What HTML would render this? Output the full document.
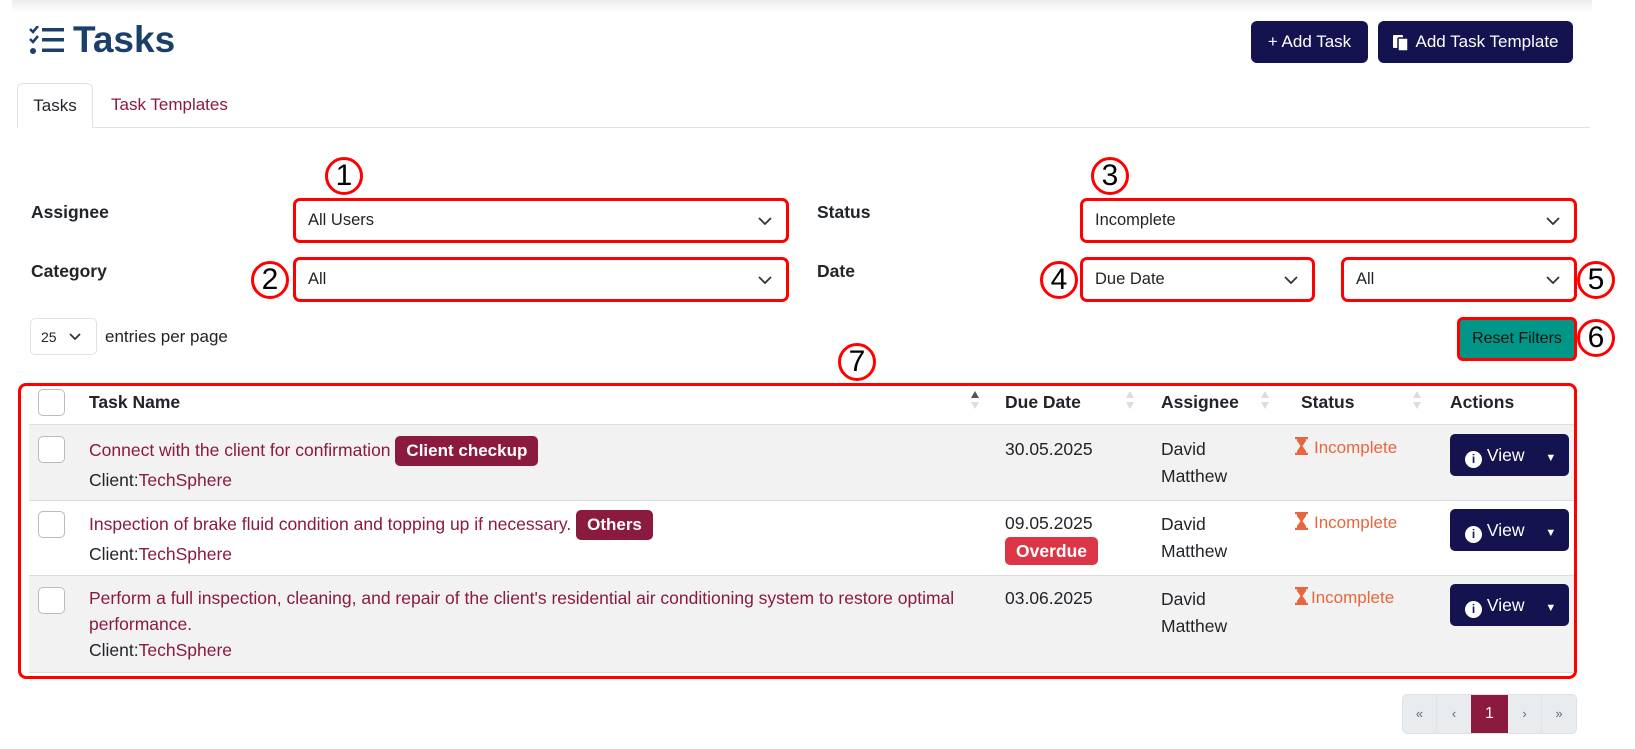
<!DOCTYPE html>
<html><head><meta charset="utf-8"><style>
*{box-sizing:border-box;margin:0;padding:0}
body{width:1635px;height:749px;background:#fff;font-family:"Liberation Sans",sans-serif;color:#212529;position:relative;overflow:hidden;font-size:16px}
.a{position:absolute}
.topbar{left:12px;top:0;width:1580px;height:12px;background:linear-gradient(#ececec,#fff)}
.btn{background:#14124f;color:#fff;border-radius:6px;display:flex;align-items:center;justify-content:center;font-size:17px}
.sel{border:3px solid #f00;border-radius:7px;background:#fff;font-size:16.5px;padding-left:12px;display:flex;align-items:center}
.sel svg{position:absolute;right:14px;top:50%;margin-top:-4px}
.lbl{font-weight:bold;font-size:17.5px}
.circ{width:38px;height:38px;border:3px solid #f00;border-radius:50%;background:#fff;display:flex;align-items:center;justify-content:center;font-size:30px;color:#000}
.link{color:#8b1a3f}
.badge{display:inline-block;background:#8b1a3f;color:#fff;font-weight:bold;border-radius:5px;padding:2px 11px;font-size:17px;line-height:26px}
.cb{width:27px;height:27px;border:1.5px solid #bbb;border-radius:5px;background:#fff}
.st{color:#e8663d;font-size:17px}
.row{font-size:17.5px}
.view{width:119px;height:42px;border-radius:5px;background:#14124f;color:#fff;font-size:17px}
</style></head><body>
<div class="a topbar"></div>
<svg class="a" style="left:29px;top:26px" width="36" height="29" viewBox="0 0 36 29"><path d="M1 3l3 3 5-6M1 13l3 3 5-6" stroke="#1b3f6b" stroke-width="2.6" fill="none"/><circle cx="4" cy="25" r="3" fill="#1b3f6b"/><rect x="13" y="2" width="22" height="3.5" fill="#1b3f6b"/><rect x="13" y="12" width="22" height="3.5" fill="#1b3f6b"/><rect x="13" y="22.5" width="22" height="3.5" fill="#1b3f6b"/></svg>
<div class="a" style="left:73px;top:19px;font-size:37px;font-weight:bold;color:#1b3f6b">Tasks</div>
<div class="a btn" style="left:1251px;top:21px;width:117px;height:42px">+ Add Task</div>
<div class="a btn" style="left:1378px;top:21px;width:195px;height:42px"><svg width="18" height="18" viewBox="0 0 18 18" style="margin-right:5px"><rect x="1" y="2" width="10" height="13" rx="1" fill="#fff"/><rect x="6" y="5" width="10" height="13" rx="1" fill="#fff" stroke="#14124f" stroke-width="1.5"/></svg>Add Task Template</div>
<div class="a" style="left:17px;top:127px;width:1573px;height:1px;background:#dee2e6"></div>
<div class="a" style="left:17px;top:83px;width:76px;height:45px;border:1px solid #dee2e6;border-bottom:none;border-radius:6px 6px 0 0;background:#fff;text-align:center;line-height:44px;font-size:17px">Tasks</div>
<div class="a link" style="left:111px;top:83px;line-height:44px;font-size:17px">Task Templates</div>

<div class="a lbl" style="left:31px;top:202px">Assignee</div>
<div class="a lbl" style="left:31px;top:261px">Category</div>
<div class="a lbl" style="left:817px;top:202px">Status</div>
<div class="a lbl" style="left:817px;top:261px">Date</div>

<div class="a sel" style="left:293px;top:198px;width:496px;height:45px">All Users<svg width="14" height="8"><path d="M1 1l6 6 6-6" stroke="#333" stroke-width="1.8" fill="none"/></svg></div>
<div class="a sel" style="left:293px;top:257px;width:496px;height:45px">All<svg width="14" height="8"><path d="M1 1l6 6 6-6" stroke="#333" stroke-width="1.8" fill="none"/></svg></div>
<div class="a sel" style="left:1080px;top:198px;width:497px;height:45px">Incomplete<svg width="14" height="8"><path d="M1 1l6 6 6-6" stroke="#333" stroke-width="1.8" fill="none"/></svg></div>
<div class="a sel" style="left:1080px;top:257px;width:235px;height:45px">Due Date<svg width="14" height="8"><path d="M1 1l6 6 6-6" stroke="#333" stroke-width="1.8" fill="none"/></svg></div>
<div class="a sel" style="left:1341px;top:257px;width:236px;height:45px">All<svg width="14" height="8"><path d="M1 1l6 6 6-6" stroke="#333" stroke-width="1.8" fill="none"/></svg></div>

<div class="a circ" style="left:325px;top:157px">1</div>
<div class="a circ" style="left:251px;top:261px">2</div>
<div class="a circ" style="left:1091px;top:157px">3</div>
<div class="a circ" style="left:1040px;top:261px">4</div>
<div class="a circ" style="left:1577px;top:261px">5</div>
<div class="a circ" style="left:1577px;top:319px">6</div>
<div class="a circ" style="left:838px;top:343px">7</div>

<div class="a" style="left:30px;top:318px;width:67px;height:37px;border:1px solid #dee2e6;border-radius:5px;font-size:14px;padding:10px 0 0 10px">25<svg width="12" height="8" style="position:absolute;left:38px;top:14px"><path d="M1 1l5 5 5-5" stroke="#333" stroke-width="1.8" fill="none"/></svg></div>
<div class="a" style="left:105px;top:327px;font-size:17px">entries per page</div>
<div class="a" style="left:1457px;top:317px;width:120px;height:44px;border:3px solid #f00;border-radius:6px;background:#009688;color:#111;font-size:16px;display:flex;align-items:center;justify-content:center">Reset Filters</div>

<div class="a" style="left:18px;top:383px;width:1559px;height:296px;border:3px solid #f00;border-radius:8px"></div>
<div class="a" style="left:29px;top:424px;width:1545px;height:1px;background:#ddd"></div>
<div class="a" style="left:29px;top:425px;width:1545px;height:75px;background:#f2f2f2"></div>
<div class="a" style="left:29px;top:500px;width:1545px;height:1px;background:#ddd"></div>
<div class="a" style="left:29px;top:575px;width:1545px;height:1px;background:#ddd"></div>
<div class="a" style="left:29px;top:576px;width:1545px;height:96px;background:#f2f2f2"></div>
<div class="a" style="left:29px;top:672px;width:1545px;height:1px;background:#ddd"></div>

<div class="a cb" style="left:38px;top:389px"></div>
<div class="a lbl" style="left:89px;top:392px">Task Name</div>
<div class="a lbl" style="left:1005px;top:392px">Due Date</div>
<div class="a lbl" style="left:1161px;top:392px">Assignee</div>
<div class="a lbl" style="left:1301px;top:392px">Status</div>
<div class="a lbl" style="left:1450px;top:392px">Actions</div>
<svg class="a" style="left:970px;top:390px" width="10" height="20"><path d="M1 8l4-7 4 7z" fill="#555"/><path d="M1 12l4 7 4-7z" fill="#ddd"/></svg>
<svg class="a" style="left:1125px;top:390px" width="10" height="20"><path d="M1 8l4-7 4 7zM1 12l4 7 4-7z" fill="#ddd"/></svg>
<svg class="a" style="left:1260px;top:390px" width="10" height="20"><path d="M1 8l4-7 4 7zM1 12l4 7 4-7z" fill="#ddd"/></svg>
<svg class="a" style="left:1412px;top:390px" width="10" height="20"><path d="M1 8l4-7 4 7zM1 12l4 7 4-7z" fill="#ddd"/></svg>

<!-- row1 -->
<div class="a cb" style="left:38px;top:436px"></div>
<div class="a row" style="left:89px;top:436px;line-height:28px"><span class="link">Connect with the client for confirmation</span> <span class="badge">Client checkup</span><br>Client:<span class="link">TechSphere</span></div>
<div class="a row" style="left:1005px;top:439px">30.05.2025</div>
<div class="a row" style="left:1161px;top:436px;line-height:27px">David<br>Matthew</div>
<!-- row2 -->
<div class="a cb" style="left:38px;top:511px"></div>
<div class="a row" style="left:89px;top:510px;line-height:28px"><span class="link">Inspection of brake fluid condition and topping up if necessary.</span> <span class="badge">Others</span><br>Client:<span class="link">TechSphere</span></div>
<div class="a row" style="left:1005px;top:513px">09.05.2025</div>
<div class="a" style="left:1005px;top:537px;background:#dc3545;color:#fff;font-weight:bold;border-radius:5px;padding:0 11px;font-size:17.5px;line-height:28px">Overdue</div>
<div class="a row" style="left:1161px;top:511px;line-height:27px">David<br>Matthew</div>
<!-- row3 -->
<div class="a cb" style="left:38px;top:587px"></div>
<div class="a row" style="left:89px;top:585px;line-height:26px;width:885px"><span class="link">Perform a full inspection, cleaning, and repair of the client's residential air conditioning system to restore optimal performance.</span><br>Client:<span class="link">TechSphere</span></div>
<div class="a row" style="left:1005px;top:588px">03.06.2025</div>
<div class="a row" style="left:1161px;top:586px;line-height:27px">David<br>Matthew</div>

<div class="a st" style="left:1295px;top:437px"><svg width="13" height="18" viewBox="0 0 13 18" style="vertical-align:-2px;margin-right:6px"><path d="M0 1h13M0 17h13" stroke="#e8663d" stroke-width="2.5"/><path d="M2 2h9v2l-3.5 5 3.5 5v2h-9v-2l3.5-5-3.5-5z" fill="#e8663d"/></svg>Incomplete</div>
<div class="a st" style="left:1295px;top:512px"><svg width="13" height="18" viewBox="0 0 13 18" style="vertical-align:-2px;margin-right:6px"><path d="M0 1h13M0 17h13" stroke="#e8663d" stroke-width="2.5"/><path d="M2 2h9v2l-3.5 5 3.5 5v2h-9v-2l3.5-5-3.5-5z" fill="#e8663d"/></svg>Incomplete</div>
<div class="a st" style="left:1295px;top:587px"><svg width="13" height="18" viewBox="0 0 13 18" style="vertical-align:-2px;margin-right:3px"><path d="M0 1h13M0 17h13" stroke="#e8663d" stroke-width="2.5"/><path d="M2 2h9v2l-3.5 5 3.5 5v2h-9v-2l3.5-5-3.5-5z" fill="#e8663d"/></svg>Incomplete</div>

<div class="a view" style="left:1450px;top:434px"></div>
<div class="a view" style="left:1450px;top:509px"></div>
<div class="a view" style="left:1450px;top:584px"></div>
<div class="a" style="left:1465px;top:445px;color:#fff;font-size:17.5px"><span style="display:inline-block;width:17px;height:17px;border-radius:50%;background:#fff;color:#14124f;font-size:12px;font-weight:bold;text-align:center;line-height:17px;vertical-align:-2px">i</span> View <span style="margin-left:16px;font-size:11px">▼</span></div>
<div class="a" style="left:1465px;top:520px;color:#fff;font-size:17.5px"><span style="display:inline-block;width:17px;height:17px;border-radius:50%;background:#fff;color:#14124f;font-size:12px;font-weight:bold;text-align:center;line-height:17px;vertical-align:-2px">i</span> View <span style="margin-left:16px;font-size:11px">▼</span></div>
<div class="a" style="left:1465px;top:595px;color:#fff;font-size:17.5px"><span style="display:inline-block;width:17px;height:17px;border-radius:50%;background:#fff;color:#14124f;font-size:12px;font-weight:bold;text-align:center;line-height:17px;vertical-align:-2px">i</span> View <span style="margin-left:16px;font-size:11px">▼</span></div>

<div class="a" style="left:1402px;top:694px;width:175px;height:40px;background:#e9ecef;border:1px solid #dee2e6;border-radius:5px;display:flex;font-size:13px;color:#666">
<div style="width:34px;text-align:center;line-height:38px;border-right:1px solid #dee2e6">«</div>
<div style="width:34px;text-align:center;line-height:38px">‹</div>
<div style="width:37px;text-align:center;line-height:38px;background:#8b1a3f;color:#fff;font-size:16px">1</div>
<div style="width:34px;text-align:center;line-height:38px;border-right:1px solid #dee2e6">›</div>
<div style="width:34px;text-align:center;line-height:38px">»</div>
</div>
</body></html>
